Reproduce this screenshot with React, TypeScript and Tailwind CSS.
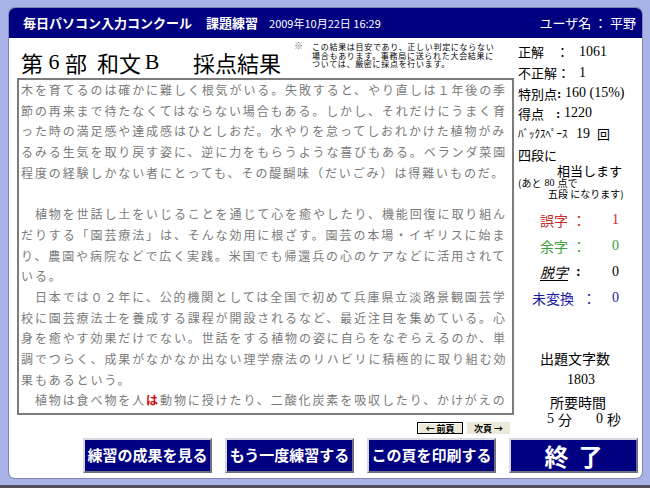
import { type FC, type ReactNode } from "react"

const JP = "font-['Noto_Sans_CJK_JP',sans-serif]"
const SERIF = "font-['Liberation_Serif','Noto_Sans_CJK_JP',serif]"

// Practice passage, one entry per displayed line (35 full-width chars)
const LINES: ReactNode[] = [
    "木を育てるのは確かに難しく根気がいる。失敗すると、やり直しは１年後の季",
    "節の再来まで待たなくてはならない場合もある。しかし、それだけにうまく育",
    "った時の満足感や達成感はひとしおだ。水やりを怠ってしおれかけた植物がみ",
    "るみる生気を取り戻す姿に、逆に力をもらうような喜びもある。ベランダ菜園",
    "程度の経験しかない者にとっても、その醍醐味（だいごみ）は得難いものだ。",
    "",
    "　植物を世話し土をいじることを通じて心を癒やしたり、機能回復に取り組ん",
    "だりする「園芸療法」は、そんな効用に根ざす。園芸の本場・イギリスに始ま",
    "り、農園や病院などで広く実践。米国でも帰還兵の心のケアなどに活用されて",
    "いる。",
    "　日本では０２年に、公的機関としては全国で初めて兵庫県立淡路景観園芸学",
    "校に園芸療法士を養成する課程が開設されるなど、最近注目を集めている。心",
    "身を癒やす効果だけでない。世話をする植物の姿に自らをなぞらえるのか、単",
    "調でつらく、成果がなかなか出ない理学療法のリハビリに積極的に取り組む効",
    "果もあるという。",
    <>
        {"　植物は食べ物を人"}
        <span className="font-bold text-[#cc1010]">は</span>
        {"動物に授けたり、二酸化炭素を吸収したり、かけがえの"}
    </>,
]

const BigButton: FC<{ label: string; big?: boolean }> = ({ label, big }) => (
    <button
        className={
            "flex h-[35px] w-[129px] items-center justify-center border-2 border-t-[#d8d8e0] border-l-[#d8d8e0] border-b-[#707080] border-r-[#707080] bg-[#000080] font-bold text-white " +
            (big ? "text-[24px] tracking-[10px] pl-[10px]" : "text-[15px]")
        }
    >
        {label}
    </button>
)

const ErrorRow: FC<{ children: ReactNode; className: string }> = ({ children, className }) => (
    <div className={"flex h-[26px] items-center text-[14px] " + className}>{children}</div>
)

export default function App() {
    return (
        <div className={"h-[488px] w-[650px] overflow-hidden border-b-[3px] border-[#50505a] bg-[#a9b2e6] pt-[8px] " + JP}>
            <div className="ml-[9px] flex h-[470px] w-[633px] flex-col rounded-[6px] bg-white shadow-[0_0_0_1px_#8088b0]">
                {/* Header */}
                <div className="flex h-[30px] items-center rounded-t-[6px] bg-[#000080] pl-[14px] pr-[6px] text-white">
                    <span className="text-[13px] font-bold">毎日パソコン入力コンクール</span>
                    <span className="ml-[14px] text-[13px] font-bold">課題練習</span>
                    <span className="ml-[11px] text-[11px]">2009年10月22日 16:29</span>
                    <span className="ml-auto text-[13px]">ユーザ名 ： 平野</span>
                </div>

                {/* Main */}
                <div className="flex h-[400px]">
                    {/* Left column */}
                    <div className="flex w-[506px] flex-col pl-[8px]">
                        <div className="flex h-[40px] items-start">
                            <h1 className="ml-[4px] mt-[13px] flex text-[22px] leading-[22px] text-black">
                                <span>第</span>
                                <span className={"inline-block w-[22px] text-center " + SERIF}>6</span>
                                <span>部</span>
                                <span className="ml-[10px]">和文</span>
                                <span className={"inline-block w-[22px] text-center " + SERIF}>B</span>
                                <span className="ml-[30px]">採点結果</span>
                            </h1>
                            <div className="ml-[13px] mt-[5px] flex text-[8px] leading-[8.5px] text-black">
                                <span className="mt-[-1px] w-[18px] text-[9px] text-[#666]">※</span>
                                <div className="tracking-[0.7px]">
                                    <div>この結果は目安であり、正しい判定にならない</div>
                                    <div>場合もあります。事務局に送られた大会結果に</div>
                                    <div>ついては、厳密に採点を行います。</div>
                                </div>
                            </div>
                        </div>

                        {/* Passage */}
                        <div className="h-[337px] w-[497px] overflow-hidden border-2 border-[#7c7c7c] pl-[2px] text-[12px] leading-[20.7px] tracking-[1.9px] text-[#7a7a7a]">
                            {LINES.map((line, i) => (
                                <div key={i} className="h-[20.7px] whitespace-pre">
                                    {line}
                                </div>
                            ))}
                        </div>

                        {/* Page nav */}
                        <div className="mt-[7px] flex justify-end gap-[4px] pr-[5px] text-[9px] font-bold leading-none text-black">
                            <button className="flex h-[12px] w-[46px] items-center justify-center border border-black bg-[#ece9d8] shadow-[inset_1px_1px_0_#fff]">
                                ← 前頁
                            </button>
                            <button className="flex h-[12px] w-[43px] items-center justify-center bg-[#ece9d8]">
                                次頁 →
                            </button>
                        </div>
                    </div>

                    {/* Right column */}
                    <div className="flex flex-1 flex-col pt-[3px] text-[13px] leading-none text-black">
                        <div className="flex h-[21px] items-center pl-[3px]">
                            <span className="w-[38px]">正解</span>
                            <span className="w-[23px]">：</span>
                            <span className={"text-[14px] " + SERIF}>1061</span>
                        </div>
                        <div className="flex h-[21px] items-center pl-[3px]">
                            <span className="w-[39px]">不正解</span>
                            <span className="w-[22px]">：</span>
                            <span className={"text-[14px] " + SERIF}>1</span>
                        </div>
                        <div className="flex h-[20px] items-center pl-[3px]">
                            <span className="w-[39px]">特別点</span>
                            <span className={"w-[8px] font-bold " + SERIF}>:</span>
                            <span className={"text-[14px] " + SERIF}>160 (15%)</span>
                        </div>
                        <div className="flex h-[20px] items-center pl-[3px]">
                            <span className="w-[38px]">得点</span>
                            <span className={"w-[8px] font-bold " + SERIF}>:</span>
                            <span className={"text-[14px] " + SERIF}>1220</span>
                        </div>
                        <div className="flex h-[21px] items-center pl-[3px]">
                            <span className="w-[58px] text-[11px]">ﾊﾞｯｸｽﾍﾟｰｽ</span>
                            <span className={"w-[21px] text-[14px] " + SERIF}>19</span>
                            <span>回</span>
                        </div>
                        <div className="flex h-[20px] items-center pl-[3px]">四段に</div>
                        <div className="flex h-[13px] items-center pl-[42px]">相当します</div>
                        <div className="flex h-[12px] items-center pl-[3px] text-[10px]">
                            (あと <span className={"mx-[3px] " + SERIF}>80</span> 点で
                        </div>
                        <div className="flex h-[10px] items-center pl-[33px] text-[10px]">五段 になります)</div>

                        <div className="mt-[8px]">
                            <ErrorRow className="pl-[25px] text-[#c42a2a]">
                                <span className="w-[32px]">誤字</span>
                                <span className="w-[40px]">：</span>
                                <span className={SERIF}>1</span>
                            </ErrorRow>
                            <ErrorRow className="pl-[25px] text-[#3a9e3a]">
                                <span className="w-[32px]">余字</span>
                                <span className="w-[40px]">：</span>
                                <span className={SERIF}>0</span>
                            </ErrorRow>
                            <ErrorRow className="pl-[25px] text-black">
                                <span className="w-[36px] italic underline underline-offset-2">脱字</span>
                                <span className={"w-[36px] font-bold " + SERIF}>:</span>
                                <span className={SERIF}>0</span>
                            </ErrorRow>
                            <ErrorRow className="pl-[17px] text-[#1a1aa6]">
                                <span className="w-[50px]">未変換</span>
                                <span className="w-[30px]">：</span>
                                <span className={SERIF}>0</span>
                            </ErrorRow>
                        </div>

                        <div className="mt-[36px] flex h-[22px] items-center pl-[25px] text-[14px]">出題文字数</div>
                        <div className={"flex h-[22px] items-center pl-[52px] text-[14px] " + SERIF}>1803</div>
                        <div className="flex h-[22px] items-center pl-[35px] text-[14px]">所要時間</div>
                        <div className="flex h-[12px] items-center pl-[32px] text-[14px]">
                            <span className={"w-[11px] " + SERIF}>5</span>
                            <span className="w-[38px]">分</span>
                            <span className={"w-[11px] " + SERIF}>0</span>
                            <span>秒</span>
                        </div>
                    </div>
                </div>

                {/* Bottom buttons */}
                <div className="flex gap-[13px] pl-[74px]">
                    <BigButton label="練習の成果を見る" />
                    <BigButton label="もう一度練習する" />
                    <BigButton label="この頁を印刷する" />
                    <BigButton label="終了" big />
                </div>
            </div>
        </div>
    )
}
